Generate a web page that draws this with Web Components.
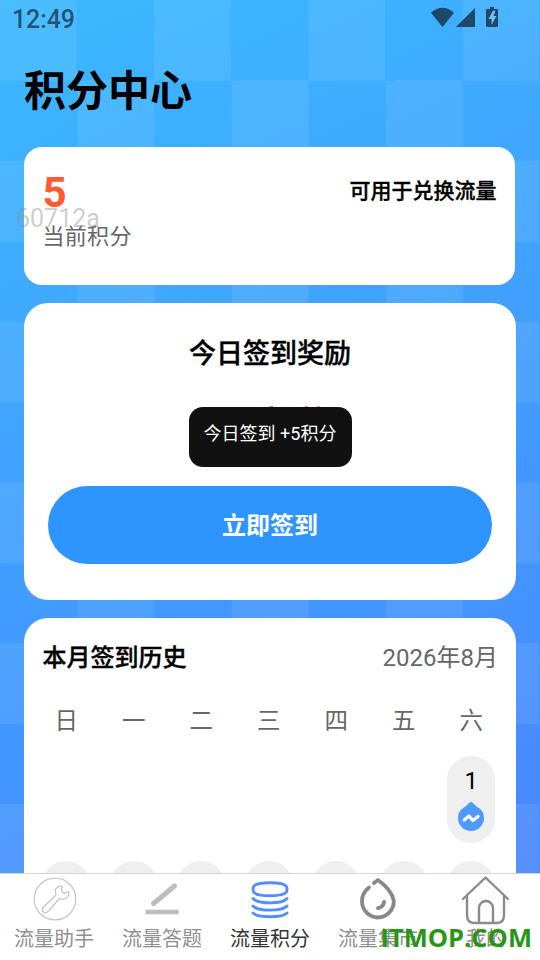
<!DOCTYPE html>
<html lang="zh-CN"><head><meta charset="utf-8"><title>积分中心</title>
<style>
html,body{margin:0;height:100%}
body{font-family:Roboto,"Noto Sans CJK SC",sans-serif;color:#000;overflow:hidden}
</style></head><body>
<points-app></points-app>
<script>
const define=(name,html)=>{
  const t=document.createElement('template');t.innerHTML=html;
  customElements.define(name,class extends HTMLElement{
    constructor(){super();this.attachShadow({mode:'open'}).append(t.content.cloneNode(true));}
  });
};
define('status-bar',`<style>
:host{display:flex;justify-content:space-between;height:40px;box-sizing:border-box;padding:5px 41px 0 12px;font-size:25px;line-height:30px;color:rgba(20,42,60,.72);font-weight:500;letter-spacing:-.1px}
svg{display:block;margin-top:1px}
</style><span>12:49</span>
<svg width="70" height="24" viewBox="429 6 70 24" fill="#1d4868"><path d="M431 12.7Q442.500 3 454 12.700L442.500 27ZM456 27L475 8v19ZM487 9h3V7h4v2h3q1 0 1 1v16q0 1-1 1h-10q-1 0-1-1V10q0-1 1-1Z"/><path d="M493 10.500L488.500 19h3v6L496.500 16h-3l2-5Z" fill="#72bafa"/></svg>`);
define('app-card',`<style>:host{display:block;background:#fff;border-radius:24px;box-sizing:border-box;position:relative}</style><slot></slot>`);
define('points-summary',`<style>
app-card{height:138px;margin-right:1px;border-radius:18px;padding:23px 18.500px 0 18.500px;display:flex;justify-content:space-between}
.n{font-size:42px;line-height:46px;font-weight:700;color:#ff5a30}
.l{font-size:22px;line-height:32px;color:#666;margin-top:5px;letter-spacing:.3px}
.r{font-size:21px;line-height:32px;font-weight:500;-webkit-text-stroke:.35px #000;margin-top:5px}
.w{position:absolute;left:-8px;top:57px;font-size:25px;line-height:29px;color:rgba(145,145,145,.45)}
</style><app-card><div><div class="n">5</div><div class="l">当前积分</div></div><div class="r">可用于兑换流量</div><span class="w">60712a</span></app-card>`);
define('toast-message',`<style>:host{display:block;position:absolute;left:164.500px;top:104px;width:163px;height:60px;box-sizing:border-box;border-radius:14px;background:#111;color:#fff;text-align:center;font-size:18px;line-height:27px;padding-top:13px;white-space:nowrap}</style><slot></slot>`);
define('checkin-button',`<style>:host{display:block}button{display:block;width:100%;height:78px;border:0;border-radius:39px;background:#2e95ff;color:#fff;font:700 24px/36px Roboto,"Noto Sans CJK SC",sans-serif;padding:1px 0 0}</style><button><slot></slot></button>`);
define('checkin-card',`<style>
app-card{height:297px;padding:31px 24px 0;text-align:center}
h2{font-size:27px;line-height:40px;font-weight:500;-webkit-text-stroke:.4px #000;margin:0}
.v{font-size:36px;line-height:48px;height:48px;font-weight:700;color:#ff4a26;margin:27px 0 37px}
</style><app-card><h2>今日签到奖励</h2><div class="v">+5 积分</div><checkin-button>立即签到</checkin-button><toast-message>今日签到 +5积分</toast-message></app-card>`);
define('calendar-day',`<style>
:host{display:flex;flex-direction:column;align-items:center;width:48px;height:87px;border-radius:24px;background:#efefef;font-size:24px;line-height:28px;padding-top:11px;box-sizing:border-box}
svg{display:block;margin-top:5px}
</style><slot></slot><svg width="28" height="32" viewBox="0 0 28 32"><path d="M14 2Q15 2 16 3Q18 5.500 22.500 8.600Q27 12 27 18A13 13 0 0 1 1 18Q1 12 5.500 8.600Q10 5.500 12 3Q13 2 14 2Z" fill="#4e9aff"/><path d="M7.200 20L12 16L15.800 20.500L21 16.500" fill="none" stroke="#fff" stroke-width="3.200" stroke-linecap="round" stroke-linejoin="round"/></svg>`);
define('calendar-card',`<style>
app-card{height:400px;padding:21px 18px 0 18.500px}
header{display:flex;justify-content:space-between;font-size:24px;line-height:38px}
b{font-weight:500;-webkit-text-stroke:.4px #000}header span{color:#666}
.g{display:grid;grid-template-columns:repeat(7,67.500px);margin-left:-10px;justify-items:center}
.h{font-size:23.500px;line-height:36px;color:#666;margin-top:26px}
.d{margin-top:17px;row-gap:18px}
.d calendar-day:first-child{grid-column:7}
</style><app-card><header><b>本月签到历史</b><span>2026年8月</span></header>
<div class="g h"><span>日</span><span>一</span><span>二</span><span>三</span><span>四</span><span>五</span><span>六</span></div>
<div class="g d"><calendar-day>1</calendar-day><calendar-day></calendar-day><calendar-day></calendar-day><calendar-day></calendar-day><calendar-day></calendar-day><calendar-day></calendar-day><calendar-day></calendar-day><calendar-day></calendar-day></div></app-card>`);
define('tab-item',`<style>
:host{display:flex;flex-direction:column;align-items:center;width:108px;color:#909090;font-size:20px;line-height:32px}
:host([active]){color:#333}
</style><slot name="icon"></slot><span><slot></slot></span>`);
define('tab-bar',`<style>
:host{display:flex;position:relative;height:87px;box-sizing:border-box;border-top:1px solid #d4d4d4;background:#fff}
svg{display:block;fill:none;overflow:visible;width:54px;height:49px;stroke-linecap:round;stroke-linejoin:round}
.brand{position:absolute;left:380.500px;top:45.500px;font:700 25.500px/34px "Open Sans","Noto Sans",sans-serif;color:#289612;white-space:nowrap}
</style>
<tab-item><svg slot="icon" viewBox="27 874 54 49" stroke="#c4c4c4" stroke-width="1.200"><circle cx="55" cy="899" r="20.800"/><path d="M68.500 891.500L64.500 893.500L61 890.500L62.500 886.500C57 885 54 889.500 56 895L43 907.500C40.500 911 45 914.500 48 911.500L59.500 898.500C65 900.500 70 897 68.500 891.500Z"/></svg>流量助手</tab-item>
<tab-item><svg slot="icon" viewBox="135 874 54 49" stroke="#bdbdbd"><path d="M145.500 912h33" stroke-width="4.500" stroke-linecap="butt"/><path d="M153.500 903.500L174.500 886" stroke-width="5" /></svg>流量答题</tab-item>
<tab-item active><svg slot="icon" viewBox="243 874 54 49" stroke="#528eff" stroke-width="2.900"><path d="M253.500 886.500C257 881.500 283 881.500 286.500 886.500Q287.500 889 286.500 892C283 897 257 897 253.500 892Q252.500 889 253.500 886.500Z"/><path d="M253 898.500C258 904.300 282 904.300 287 898.500M253 906C258 911.500 282 911.500 287 906M253 913C258 918 282 918 287 913"/></svg>流量积分</tab-item>
<tab-item><svg slot="icon" viewBox="351 874 54 49" stroke="#888" stroke-width="3.800"><path d="M374 883L378 880Q392 890 393.800 901A15.900 16.500 0 1 1 362 901Q362 893 369 887.500"/><path d="M384 902Q383.500 907 378 908.200"/></svg>流量集市</tab-item>
<tab-item><svg slot="icon" viewBox="459 874 54 49" stroke="#8b8b8b" stroke-width="2.400"><path d="M463 899L485.500 877.500L508 899M467 897V915Q467 923 474 923H497Q504 923 504 915V897M479 922V908A7 7 0 0 1 493 908V922"/></svg>我的</tab-item>
<span class="brand">ITMOP.COM</span>`);
define('points-app',`<style>
:host{display:flex;flex-direction:column;width:540px;height:960px;overflow:hidden;
background:conic-gradient(transparent 25%,rgba(255,255,255,.075) 0 50%,transparent 0 75%,rgba(255,255,255,.075) 0) 0 0/154.200px 160.800px,linear-gradient(155deg,#3bb9ff 0%,#40a5ff 35%,#4297ff 60%,#4a84ff 100%)}
main{flex:1;min-height:0;overflow:hidden}
h1{font-size:42px;line-height:60px;font-weight:700;margin:22px 0 25px 24px}
section{display:flex;flex-direction:column;gap:18px;padding:0 24px}
</style><main><status-bar></status-bar><h1>积分中心</h1><section><points-summary></points-summary><checkin-card></checkin-card><calendar-card></calendar-card></section></main><tab-bar></tab-bar>`);
</script></body></html>
